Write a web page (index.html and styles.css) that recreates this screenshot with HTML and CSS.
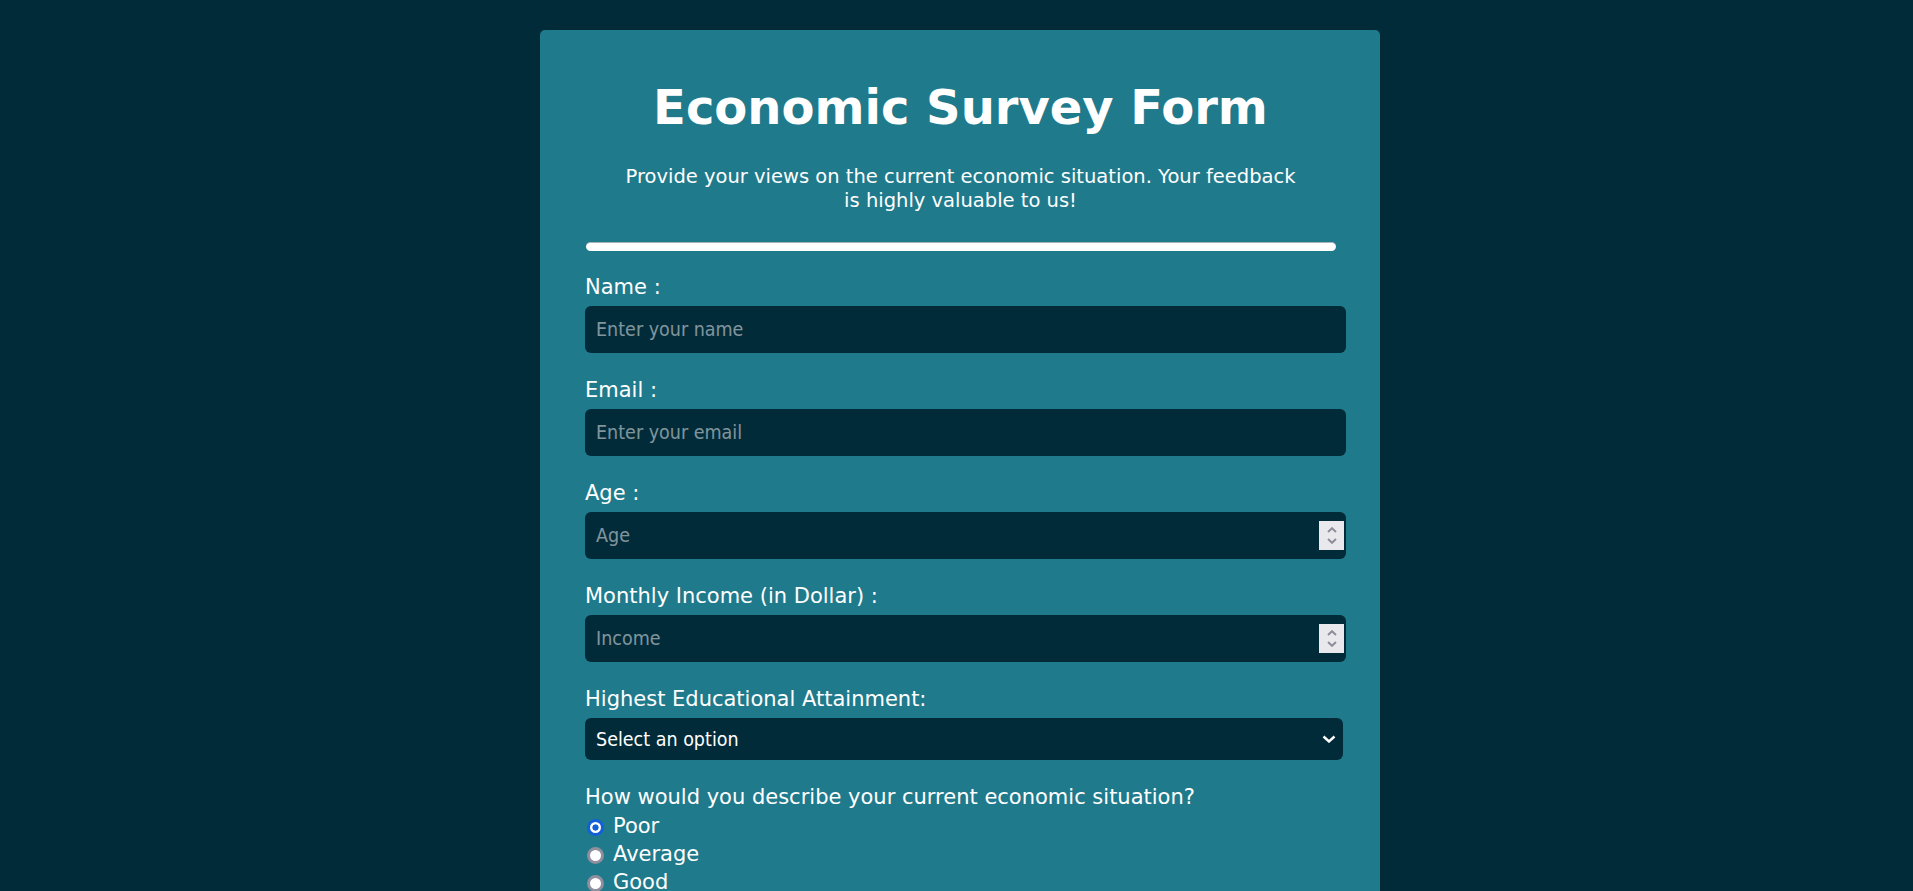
FILE: index.html
```html
<!DOCTYPE html>
<html lang="en">
<head>
<meta charset="utf-8">
<title>Economic Survey Form</title>
<link rel="stylesheet" href="styles.css">
</head>
<body>
<main class="card">
  <h1 class="title" id="title">Economic Survey Form</h1>
  <p class="description" id="description">Provide your views on the current economic situation. Your feedback is highly valuable to us!</p>
  <div class="divider"></div>
  <form class="survey" id="survey-form">
    <div class="field">
      <label class="label" for="name">Name :</label>
      <input class="control" id="name" type="text" placeholder="Enter your name">
    </div>
    <div class="field">
      <label class="label" for="email">Email :</label>
      <input class="control" id="email" type="email" placeholder="Enter your email">
    </div>
    <div class="field">
      <label class="label" for="age">Age :</label>
      <div class="control number">
        <input class="number-input" id="age" type="number" placeholder="Age">
        <span class="spin" aria-hidden="true">
          <svg width="10" height="6" viewBox="0 0 10 6"><path d="M1 5 L5 1.2 L9 5" fill="none" stroke="#8e8e9b" stroke-width="2"/></svg>
          <svg width="10" height="6" viewBox="0 0 10 6"><path d="M1 1 L5 4.8 L9 1" fill="none" stroke="#8e8e9b" stroke-width="2"/></svg>
        </span>
      </div>
    </div>
    <div class="field">
      <label class="label" for="income">Monthly Income (in Dollar) :</label>
      <div class="control number">
        <input class="number-input" id="income" type="number" placeholder="Income">
        <span class="spin" aria-hidden="true">
          <svg width="10" height="6" viewBox="0 0 10 6"><path d="M1 5 L5 1.2 L9 5" fill="none" stroke="#8e8e9b" stroke-width="2"/></svg>
          <svg width="10" height="6" viewBox="0 0 10 6"><path d="M1 1 L5 4.8 L9 1" fill="none" stroke="#8e8e9b" stroke-width="2"/></svg>
        </span>
      </div>
    </div>
    <div class="field">
      <label class="label" for="education">Highest Educational Attainment:</label>
      <select class="select" id="education">
        <option>Select an option</option>
        <option>High School</option>
        <option>Bachelor's Degree</option>
        <option>Master's Degree</option>
        <option>Doctorate</option>
      </select>
    </div>
    <div class="field">
      <p class="label question">How would you describe your current economic situation?</p>
      <label class="choice"><input class="radio" type="radio" name="situation" value="poor" checked> Poor</label>
      <label class="choice"><input class="radio" type="radio" name="situation" value="average"> Average</label>
      <label class="choice"><input class="radio" type="radio" name="situation" value="good"> Good</label>
      <label class="choice"><input class="radio" type="radio" name="situation" value="excellent"> Excellent</label>
    </div>
    <div class="field">
      <label class="label" for="comments">Any additional comments?</label>
      <textarea class="control area" id="comments" placeholder="Enter your comment here..."></textarea>
    </div>
    <button class="submit" type="submit">Submit</button>
  </form>
</main>
</body>
</html>
```
FILE: styles.css
```css
* { box-sizing: border-box; }

body {
  margin: 0;
  padding-left: 7px;
  background: #022b3a;
  color: #ffffff;
  font-family: "DejaVu Sans", Verdana, sans-serif;
}

.card {
  width: 840px;
  margin: 30px auto 40px;
  padding: 47px 44px 40px 45px;
  background: #1f7a8c;
  border-radius: 5px;
}

.title {
  margin: 0;
  font-size: 48px;
  line-height: 60px;
  font-weight: bold;
  text-align: center;
}

.description {
  max-width: 680px;
  margin: 28px auto 0;
  font-size: 19.5px;
  line-height: 24px;
  text-align: center;
}

.divider {
  height: 9px;
  margin: 29px 0 0 1px;
  background: #ffffff;
  border-top: 1px solid #a9b4b8;
  border-radius: 5px;
}

.survey {
  margin-top: 24px;
}

.field {
  display: flex;
  flex-direction: column;
  margin-bottom: 25px;
}

.label {
  margin: 0 0 7px;
  font-size: 21px;
  line-height: 24px;
}

.control {
  width: calc(100% + 10px);
  height: 47px;
  padding: 0 0 0 11px;
  border: none;
  border-radius: 6px;
  background: #022b3a;
  color: #ffffff;
  font-family: "DejaVu Sans Condensed", "DejaVu Sans", sans-serif;
  font-stretch: condensed;
  font-size: 19.5px;
}

.control::placeholder,
.number-input::placeholder {
  color: rgba(255, 255, 255, 0.5);
}

.number {
  display: flex;
  align-items: center;
  padding-right: 2px;
}

.number-input {
  flex: 1;
  min-width: 0;
  height: 100%;
  padding: 0;
  border: none;
  outline: none;
  background: transparent;
  color: #ffffff;
  font: inherit;
  font-stretch: condensed;
  -moz-appearance: textfield;
}

.number-input::-webkit-inner-spin-button,
.number-input::-webkit-outer-spin-button {
  -webkit-appearance: none;
  margin: 0;
}

.spin {
  display: flex;
  flex-direction: column;
  align-items: center;
  justify-content: center;
  gap: 5px;
  width: 25px;
  height: 29px;
  background: #e9e9ed;
}

.spin svg {
  display: block;
}

.area {
  height: 120px;
  padding-top: 10px;
}

.select {
  width: calc(100% + 7px);
  height: 42px;
  padding: 0 30px 0 11px;
  border: none;
  border-radius: 6px;
  background-color: #022b3a;
  background-image: url("data:image/svg+xml,%3Csvg xmlns='http://www.w3.org/2000/svg' width='14' height='8' viewBox='0 0 14 8'%3E%3Cpath d='M1.5 1.5 L7 6.5 L12.5 1.5' fill='none' stroke='%23ffffff' stroke-width='2.4'/%3E%3C/svg%3E");
  background-repeat: no-repeat;
  background-position: right 7px center;
  color: #ffffff;
  font-family: "DejaVu Sans Condensed", "DejaVu Sans", sans-serif;
  font-stretch: condensed;
  font-size: 19.5px;
  -webkit-appearance: none;
  appearance: none;
}

.question {
  margin-bottom: 3px;
}

.choice {
  display: flex;
  align-items: center;
  gap: 9px;
  font-size: 21px;
  line-height: 28px;
}

.radio {
  -webkit-appearance: none;
  appearance: none;
  flex: none;
  width: 17px;
  height: 17px;
  margin: 2px 0 0 2px;
  border: 3px solid #8f8f9d;
  border-radius: 50%;
  background: #ffffff;
}

.radio:checked {
  border-color: #1260d8;
  background: radial-gradient(circle, #1260d8 0 2.8px, #ffffff 3.4px);
}

.submit {
  display: block;
  width: 100%;
  height: 48px;
  border: none;
  border-radius: 6px;
  background: #022b3a;
  color: #ffffff;
  font-family: inherit;
  font-size: 20px;
}
```
